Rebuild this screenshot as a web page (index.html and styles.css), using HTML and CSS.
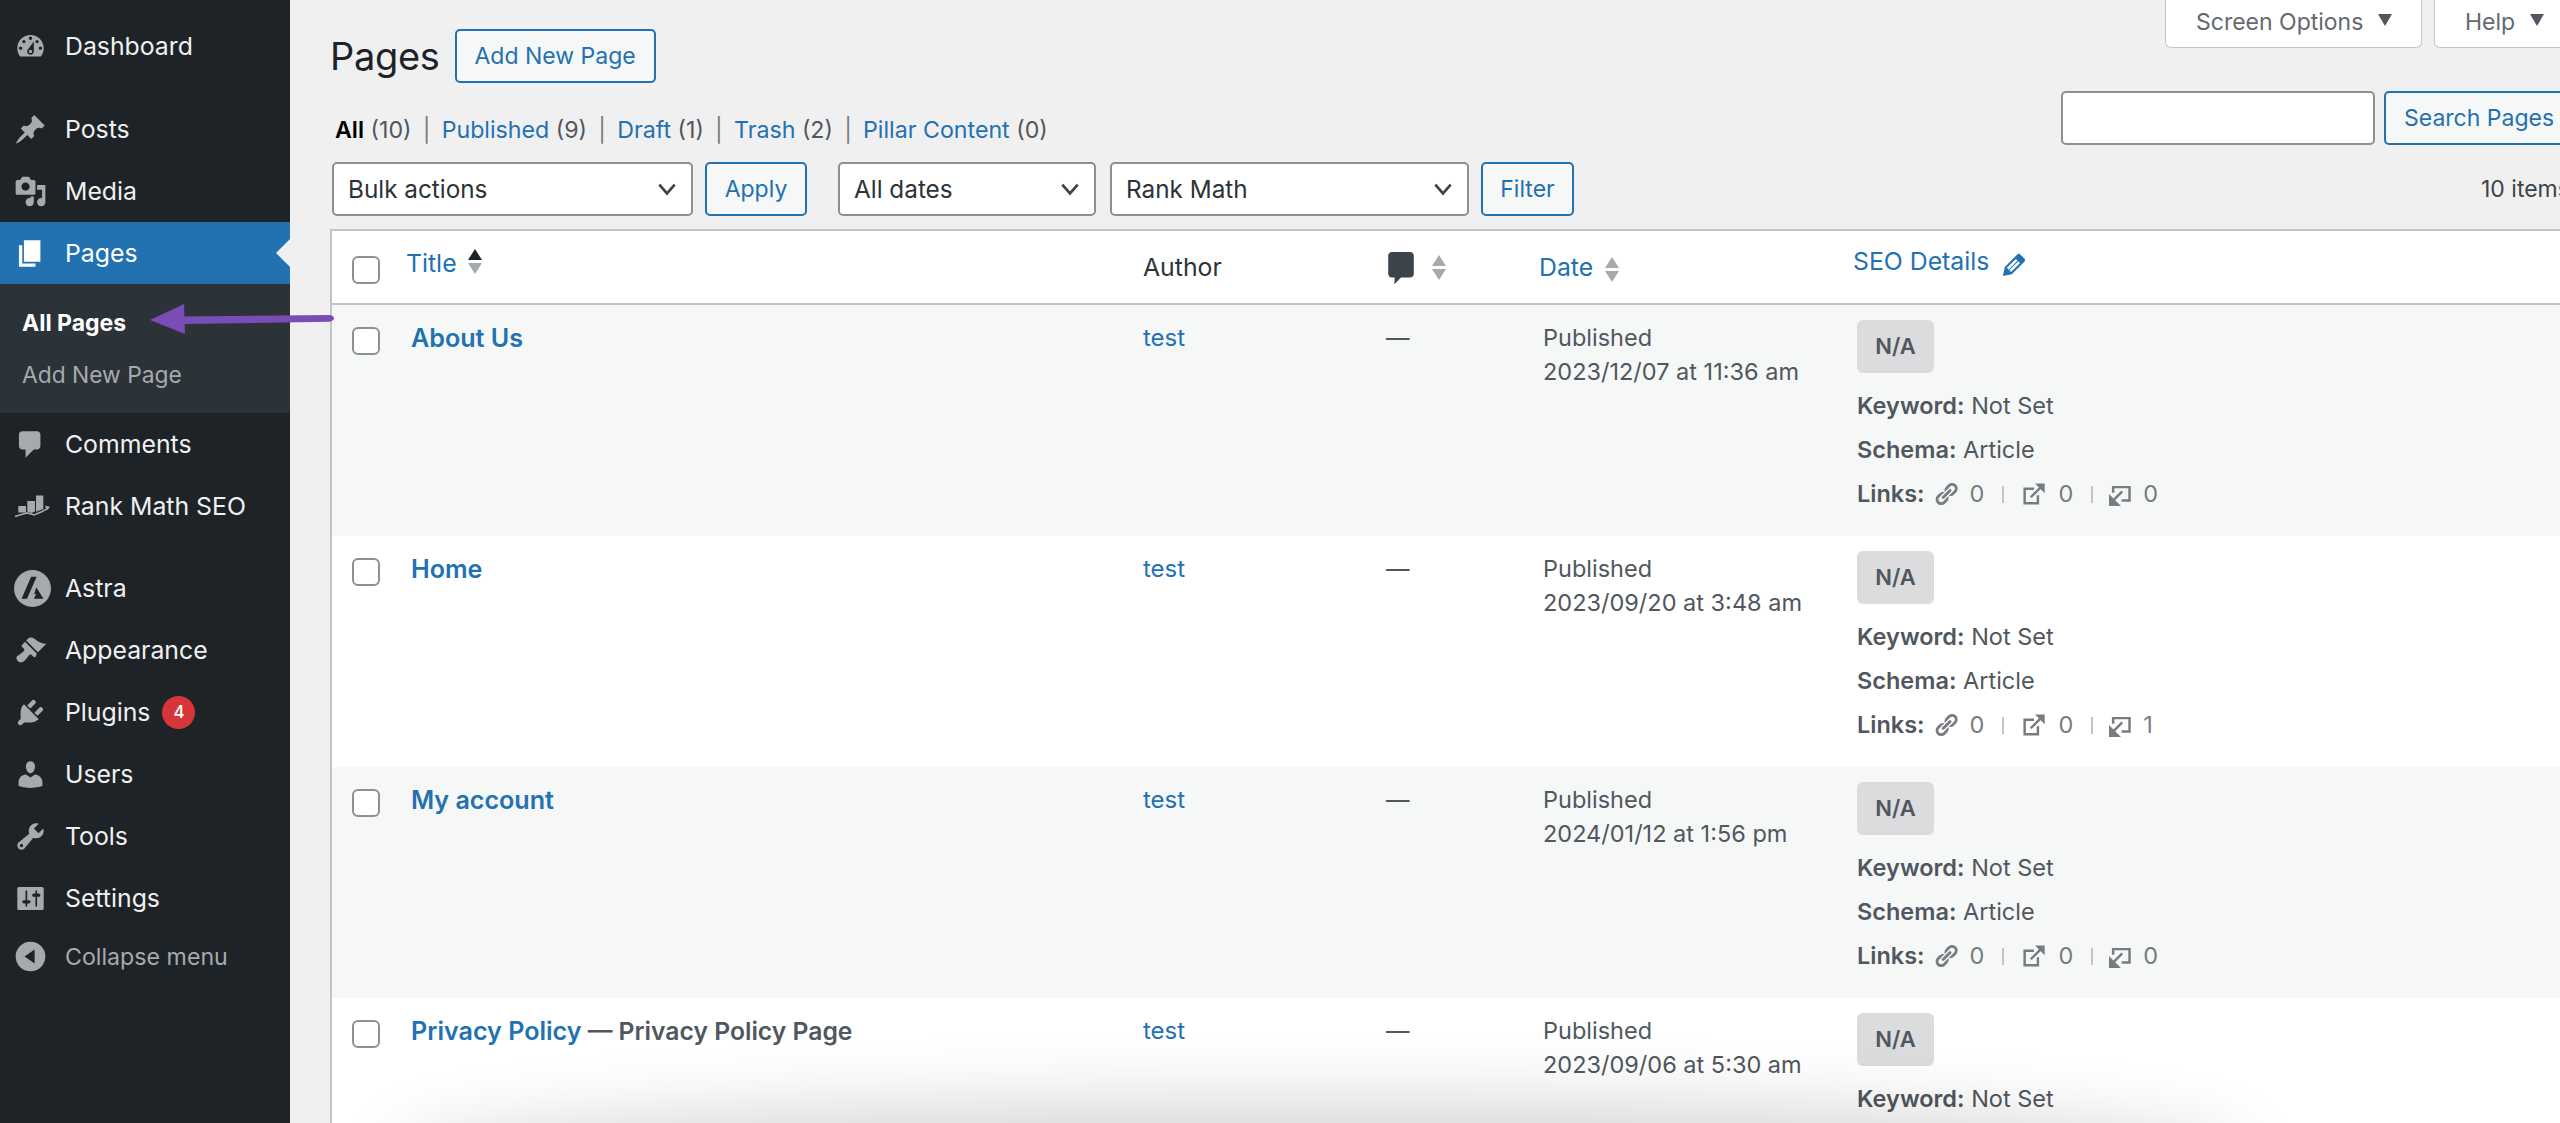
FILE: index.html
```html
<!DOCTYPE html>
<html lang="en">
<head>
<meta charset="utf-8">
<title>Pages</title>
<link rel="stylesheet" href="styles.css">
</head>
<body>
<svg class="defs" width="0" height="0" aria-hidden="true">
  <symbol id="i-link" viewBox="0 0 20 20"><path fill="currentColor" d="M17.74 2.76c1.68 1.69 1.68 4.41 0 6.1l-1.53 1.52c-1.12 1.12-2.7 1.47-4.14 1.09l2.62-2.61.76-.77.76-.76c.84-.84.84-2.2 0-3.04-.84-.85-2.2-.85-3.04 0l-.77.76-3.38 3.38c-.37-1.44-.02-3.02 1.1-4.14l1.52-1.53c1.69-1.68 4.42-1.68 6.1 0zM8.59 13.43l5.34-5.34c.42-.42.42-1.1 0-1.52-.44-.43-1.13-.39-1.53 0l-5.33 5.34c-.42.42-.42 1.1 0 1.52.44.43 1.13.39 1.52 0zm-.76 2.29l4.14-4.15c.38 1.44.03 3.02-1.09 4.14l-1.52 1.53c-1.69 1.68-4.41 1.68-6.1 0-1.68-1.68-1.68-4.42 0-6.1l1.53-1.52c1.12-1.12 2.7-1.47 4.14-1.1l-4.14 4.15c-.85.84-.85 2.2 0 3.05.84.84 2.2.84 3.04 0z"/></symbol>
  <symbol id="i-ext" viewBox="0 0 20 20"><path fill="none" stroke="currentColor" stroke-width="1.900" d="M10 5.900H2.800V17.100H13V11M7.500 12.500L15.500 4.500"/><path fill="currentColor" d="M10.800 2H18.200V9.400z"/></symbol>
  <symbol id="i-int" viewBox="0 0 20 20"><path fill="none" stroke="currentColor" stroke-width="1.900" d="M5.500 9V4.700H18.100V15H12M12.500 8L6 14.500"/><path fill="currentColor" d="M2.300 10V19.200H11.500z"/></symbol>
</svg>

<aside class="sidebar">
  <ul class="menu">
    <li class="item"><svg class="ico" viewBox="0 0 20 20"><path fill-rule="evenodd" d="M3.76 16h12.48c1.1-1.37 1.76-3.11 1.76-5 0-4.42-3.58-8-8-8s-8 3.58-8 8c0 1.89.66 3.63 1.76 5zM10 4c.55 0 1 .45 1 1s-.45 1-1 1-1-.45-1-1 .45-1 1-1zM6 6c.55 0 1 .45 1 1s-.45 1-1 1-1-.45-1-1 .45-1 1-1zm8 0c.55 0 1 .45 1 1s-.45 1-1 1-1-.45-1-1 .45-1 1-1zm-5.370 5.550L12 7v6c0 1.100-.9 2-2 2s-2-.9-2-2c0-.57.24-1.080.63-1.450zM4 10c.55 0 1 .45 1 1s-.45 1-1 1-1-.45-1-1 .45-1 1-1zm12 0c.55 0 1 .45 1 1s-.45 1-1 1-1-.45-1-1 .45-1 1-1zm-5 3c0-.55-.45-1-1-1s-1 .45-1 1 .45 1 1 1 1-.45 1-1z"/></svg>Dashboard</li>
    <li class="item gap-s"><svg class="ico" viewBox="0 0 20 20"><path d="M10.440 3.020l1.820-1.820 6.360 6.350-1.830 1.820c-1.050-.68-2.480-.57-3.410.36l-.75.75c-.92.93-1.040 2.350-.35 3.410l-1.830 1.820-2.410-2.410-2.800 2.790c-.42.42-3.380 2.710-3.800 2.290s1.860-3.390 2.280-3.810l2.790-2.790L4.100 9.360l1.830-1.820c1.050.69 2.480.57 3.400-.36l.75-.75c.93-.92 1.050-2.350.36-3.410z"/></svg>Posts</li>
    <li class="item"><svg class="ico" viewBox="0 0 20 20"><path fill-rule="evenodd" d="M13 11V4c0-.55-.45-1-1-1h-1.670L9 1H5L3.670 3H2c-.55 0-1 .45-1 1v7c0 .55.45 1 1 1h10c.55 0 1-.45 1-1zM7 4.500c1.380 0 2.500 1.120 2.500 2.500S8.380 9.500 7 9.500 4.500 8.380 4.500 7 5.620 4.500 7 4.500zM14 6h5v10.500c0 1.380-1.120 2.500-2.500 2.500S14 17.880 14 16.500s1.120-2.500 2.500-2.500c.17 0 .34.02.5.05V9h-3V6zm-4 8.050V13h2v3.500c0 1.380-1.120 2.500-2.500 2.500S7 17.880 7 16.500 8.120 14 9.500 14c.17 0 .34.02.5.05z"/></svg>Media</li>
    <li class="item current"><svg class="ico" viewBox="0 0 20 20"><path d="M6 15V2h10v13H6zm-1 1h8v2H3V5h2v11z"/></svg>Pages</li>
    <li class="submenu">
      <a class="sub on">All Pages</a>
      <a class="sub">Add New Page</a>
    </li>
    <li class="item"><svg class="ico" viewBox="0 0 20 20"><path d="M5 2h9c1.100 0 2 .9 2 2v7c0 1.100-.9 2-2 2h-2l-5 5v-5H5c-1.100 0-2-.9-2-2V4c0-1.100.9-2 2-2z"/></svg>Comments</li>
    <li class="item"><svg class="ico ico-big" viewBox="0 0 37 37"><path d="M4.300 18h7.700v6.500H4.300zM13.300 13H21v10.500l-3.500 1.500-4.200-1.500zM22 7.500h7.300V21l-7.300 2.800z"/><path fill="none" stroke="#a7aaad" stroke-width="1.600" d="M1 28.500l8-2.600 4.500-1 6.500 2 7-3 7.500-3.800"/><path d="M31 17.500l5 1.200-3.400 3.600z"/></svg>Rank Math SEO</li>
    <li class="item gap-l"><svg class="ico ico-big" viewBox="0 0 108 108"><circle cx="54" cy="54" r="54"/><path class="astra-a" d="M50 20h16L38 84H22zM65 50l21 34H58l7-14-6 1z"/></svg>Astra</li>
    <li class="item"><svg class="ico" viewBox="0 0 20 20"><path d="M14.480 11.060L7.410 3.990l1.500-1.500c.5-.56 2.300-.47 3.510.32 1.210.8 1.430 1.280 2.910 2.100 1.180.64 2.450 1.260 4.450.85zm-.71.71L6.700 4.700 4.930 6.470c-.39.39-.39 1.020 0 1.410l1.060 1.060c.39.39.39 1.030 0 1.420-.6.6-1.430 1.110-2.210 1.690-.35.26-.7.53-1.010.84C1.430 13.230.99 15.040 2.300 16.350s3.120.87 4.450-.43c.31-.31.58-.66.84-1.010.58-.78 1.090-1.610 1.690-2.210.39-.39 1.030-.39 1.420 0l1.060 1.060c.39.39 1.020.39 1.410 0z"/></svg>Appearance</li>
    <li class="item"><svg class="ico" viewBox="0 0 20 20"><path d="M13.110 4.360L9.870 7.600 8 5.730l3.240-3.240c.35-.34 1.050-.2 1.560.32.52.51.66 1.210.31 1.550zm-8 1.770l.91-1.120 9.010 9.010-1.190.84c-.71.71-2.630 1.160-3.820 1.160H6.140L4.900 17.260c-.59.59-1.540.59-2.120 0-.59-.58-.59-1.530 0-2.120l1.240-1.240v-3.880c0-1.130.4-3.190 1.090-3.890zm7.260 3.970l3.240-3.240c.34-.35 1.040-.21 1.550.31.52.51.66 1.210.31 1.550l-3.240 3.250z"/></svg>Plugins<span class="badge">4</span></li>
    <li class="item"><svg class="ico" viewBox="0 0 20 20"><path d="M10 9.250c-2.270 0-2.730-3.440-2.730-3.440C7 4.020 7.820 2 9.970 2c2.160 0 2.980 2.020 2.710 3.810 0 0-.41 3.440-2.680 3.440zm0 2.570L12.720 10c2.390 0 4.520 2.330 4.520 4.530v2.490s-3.650 1.130-7.240 1.130c-3.650 0-7.240-1.130-7.240-1.130v-2.490c0-2.250 1.940-4.480 4.470-4.480z"/></svg>Users</li>
    <li class="item"><svg class="ico" viewBox="0 0 20 20"><path fill-rule="evenodd" d="M16.680 9.770c-1.340 1.340-3.300 1.670-4.950.99l-5.410 6.520c-.99.99-2.590.99-3.580 0s-.99-2.590 0-3.570l6.520-5.420c-.68-1.650-.35-3.610.99-4.950 1.280-1.280 3.120-1.620 4.720-1.060l-2.890 2.890 2.820 2.820 2.860-2.870c.53 1.580.18 3.390-1.080 4.650zM3.810 16.210c.4.39 1.040.39 1.430 0 .4-.4.4-1.040 0-1.430-.39-.4-1.030-.4-1.430 0-.39.39-.39 1.030 0 1.430z"/></svg>Tools</li>
    <li class="item"><svg class="ico" viewBox="0 0 20 20"><path fill-rule="evenodd" d="M18 16V4c0-.55-.45-1-1-1H3c-.55 0-1 .45-1 1v12c0 .55.45 1 1 1h14c.55 0 1-.45 1-1zM8 11h1c.55 0 1 .45 1 1s-.45 1-1 1H8v1.500c0 .28-.22.5-.5.5s-.5-.22-.5-.5V13H6c-.55 0-1-.45-1-1s.45-1 1-1h1V5.500c0-.28.22-.5.5-.5s.5.22.5.5V11zm5-2h-1c-.55 0-1-.45-1-1s.45-1 1-1h1V5.500c0-.28.22-.5.5-.5s.5.22.5.5V7h1c.55 0 1 .45 1 1s-.45 1-1 1h-1v5.500c0 .28-.22.5-.5.5s-.5-.22-.5-.5V9z"/></svg>Settings</li>
    <li class="item collapse"><svg class="ico" viewBox="0 0 20 20"><path fill-rule="evenodd" d="M10 1a9 9 0 1 0 0 18 9 9 0 0 0 0-18zm2.500 4.800v8.400L6.400 10z"/></svg>Collapse menu</li>
  </ul>
</aside>

<main class="main">
  <div class="tabs">
    <div class="tab tab-screen">Screen Options<span class="caret"></span></div>
    <div class="tab tab-help">Help<span class="caret"></span></div>
  </div>

  <div class="title-row">
    <h1>Pages</h1>
    <a class="btn btn-add">Add New Page</a>
  </div>

  <div class="views-row">
    <ul class="views">
      <li><b>All</b> <span>(10)</span></li>
      <li><a>Published</a> <span>(9)</span></li>
      <li><a>Draft</a> <span>(1)</span></li>
      <li><a>Trash</a> <span>(2)</span></li>
      <li><a>Pillar Content</a> <span>(0)</span></li>
    </ul>
    <div class="search">
      <input class="search-input" type="text" aria-label="Search">
      <a class="btn btn-search">Search Pages</a>
    </div>
  </div>

  <div class="actions">
    <select class="sel sel-bulk"><option>Bulk actions</option></select>
    <a class="btn btn-apply">Apply</a>
    <select class="sel sel-date"><option>All dates</option></select>
    <select class="sel sel-rank"><option>Rank Math</option></select>
    <a class="btn btn-filter">Filter</a>
    <span class="count">10 items</span>
  </div>

  <table class="list">
    <colgroup>
      <col class="c-check"><col class="c-title"><col class="c-author"><col class="c-comm"><col class="c-date"><col class="c-seo">
    </colgroup>
    <thead>
      <tr>
        <th><span class="box"></span></th>
        <th class="th-title"><a>Title</a><span class="sort up"><i></i><i></i></span></th>
        <th class="th-author">Author</th>
        <th class="th-comm"><svg class="bubble" viewBox="0 0 16 20"><path d="M2.400 0h11.200C15 0 16 1 16 2.400v11.200c0 1.400-1 2.400-2.400 2.400H8l-4.200 4.200.3-4.200H2.400C1 16 0 15 0 13.600V2.400C0 1 1 0 2.400 0z"/></svg><span class="sort"><i></i><i></i></span></th>
        <th class="th-date"><a>Date</a><span class="sort"><i></i><i></i></span></th>
        <th class="th-seo"><a>SEO Details</a><svg class="pencil" viewBox="0 0 20 20"><path fill-rule="evenodd" d="M13.890 3.390l2.710 2.720c.46.46.42 1.240.03 1.640l-8.010 8.020-5.560 1.160 1.160-5.580s7.600-7.630 7.990-8.030c.39-.39 1.220-.39 1.680.07zm-2.730 2.790l-5.590 5.610 1.110 1.110 5.540-5.650zm-2.970 8.230l5.580-5.600-1.070-1.080-5.590 5.600z"/></svg></th>
      </tr>
    </thead>
    <tbody>
      <tr class="odd">
        <td><span class="box"></span></td>
        <td><a class="ttl">About Us</a></td>
        <td><a>test</a></td>
        <td class="dash">—</td>
        <td>Published<br>2023/12/07 at 11:36 am</td>
        <td><div class="na">N/A</div><p><b>Keyword:</b> Not Set</p><p><b>Schema:</b> Article</p><p class="links"><b>Links:</b><svg class="lk lk-a"><use href="#i-link"/></svg><span>0</span><i class="sep"></i><svg class="lk"><use href="#i-ext"/></svg><span>0</span><i class="sep"></i><svg class="lk lk-c"><use href="#i-int"/></svg><span>0</span></p></td>
      </tr>
      <tr>
        <td><span class="box"></span></td>
        <td><a class="ttl">Home</a></td>
        <td><a>test</a></td>
        <td class="dash">—</td>
        <td>Published<br>2023/09/20 at 3:48 am</td>
        <td><div class="na">N/A</div><p><b>Keyword:</b> Not Set</p><p><b>Schema:</b> Article</p><p class="links"><b>Links:</b><svg class="lk lk-a"><use href="#i-link"/></svg><span>0</span><i class="sep"></i><svg class="lk"><use href="#i-ext"/></svg><span>0</span><i class="sep"></i><svg class="lk lk-c"><use href="#i-int"/></svg><span>1</span></p></td>
      </tr>
      <tr class="odd">
        <td><span class="box"></span></td>
        <td><a class="ttl">My account</a></td>
        <td><a>test</a></td>
        <td class="dash">—</td>
        <td>Published<br>2024/01/12 at 1:56 pm</td>
        <td><div class="na">N/A</div><p><b>Keyword:</b> Not Set</p><p><b>Schema:</b> Article</p><p class="links"><b>Links:</b><svg class="lk lk-a"><use href="#i-link"/></svg><span>0</span><i class="sep"></i><svg class="lk"><use href="#i-ext"/></svg><span>0</span><i class="sep"></i><svg class="lk lk-c"><use href="#i-int"/></svg><span>0</span></p></td>
      </tr>
      <tr>
        <td><span class="box"></span></td>
        <td><a class="ttl">Privacy Policy</a><b class="state"> — Privacy Policy Page</b></td>
        <td><a>test</a></td>
        <td class="dash">—</td>
        <td>Published<br>2023/09/06 at 5:30 am</td>
        <td><div class="na">N/A</div><p><b>Keyword:</b> Not Set</p></td>
      </tr>
    </tbody>
  </table>
</main>

<svg class="arrow" viewBox="0 0 184 30"><path d="M33 12.500l146-1.500c3 0 5 1.500 5 3.300s-2 3.300-5 3.500L33 20z"/><path d="M0 16L34 0l1 30z"/></svg>
<div class="fade"></div>
</body>
</html>
```

FILE: styles.css
```css
* { box-sizing: border-box; }
html, body { margin: 0; padding: 0; height: 1123px; overflow: hidden; }
body {
  position: relative;
  display: flex;
  width: 2560px;
  background: #f0f0f1;
  color: #3c434a;
  font-family: Inter, "Liberation Sans", sans-serif;
  font-size: 23.5px;
}
a { color: #2271b1; text-decoration: none; }
.defs { position: absolute; }

/* sidebar */
.sidebar { flex: 0 0 290px; height: 1123px; background: #1d2327; }
.menu { list-style: none; margin: 0; padding: 15px 0 0; }
.item {
  display: flex;
  align-items: center;
  height: 62px;
  padding-left: 14px;
  color: #f0f0f1;
  font-size: 24.8px;
}
.item.gap-s { margin-top: 21px; }
.item.gap-l { margin-top: 20px; }
.ico { flex: none; width: 33px; height: 33px; margin-right: 18px; fill: #a7aaad; }
.ico-big { width: 37px; height: 37px; margin-right: 14px; }
.astra-a { fill: #1d2327; }
.current { position: relative; background: #2271b1; color: #fff; }
.current .ico { fill: #fff; }
.current::after {
  content: "";
  position: absolute;
  right: 0;
  top: 50%;
  margin-top: -14px;
  border: 14px solid transparent;
  border-left: 0;
  border-right: 14px solid #f0f0f1;
}
.submenu {
  display: flex;
  flex-direction: column;
  height: 129px;
  padding: 14px 0 0 22px;
  background: #2c3338;
}
.sub { height: 51px; line-height: 51px; font-size: 22.8px; color: #a7aaad; }
.sub.on { color: #fff; font-weight: 700; font-size: 23px; }
.badge {
  width: 33px;
  height: 33px;
  margin-left: 12px;
  border-radius: 50%;
  background: #d63638;
  color: #fff;
  font-size: 17px;
  font-weight: 500;
  line-height: 33px;
  text-align: center;
}
.collapse { height: 55px; color: #a7aaad; font-size: 23.2px; }

/* main */
.main { position: relative; flex: none; width: 2270px; height: 1123px; padding-left: 40px; overflow: hidden; }
.tabs { position: absolute; top: 0; left: 1875px; display: flex; gap: 12px; }
.tab {
  display: flex;
  align-items: center;
  height: 48px;
  padding: 0 0 3px 30px;
  background: #fff;
  border: 1px solid #c3c4c7;
  border-top: 0;
  border-radius: 0 0 6px 6px;
  color: #646970;
  font-size: 23px;
}
.tab-screen { width: 257px; }
.tab-help { width: 140px; }
.caret {
  margin-left: 15px;
  margin-top: -4px;
  border-left: 7px solid transparent;
  border-right: 7px solid transparent;
  border-top: 12px solid #50575e;
}
.title-row { display: flex; align-items: center; padding-top: 29px; height: 83px; }
h1 { margin: 0; font-size: 38px; font-weight: 400; color: #1d2327; line-height: 54px; letter-spacing: -0.3px; }
.btn {
  display: flex;
  flex: none;
  align-items: center;
  justify-content: center;
  height: 54px;
  background: #f6f7f7;
  border: 2px solid #2271b1;
  border-radius: 5px;
  color: #2271b1;
  font-size: 23px;
}
.btn-add { width: 201px; margin-left: 15px; }
.views-row { position: relative; height: 79px; }
.views { display: flex; list-style: none; margin: 0; padding: 32px 0 0 5px; color: #50575e; font-size: 23.2px; line-height: 30px; }
.views li + li::before { content: "|"; margin: 0 11.2px; color: #787c82; }
.views b { color: #000; font-weight: 600; }
.search { position: absolute; right: -80px; top: 8px; display: flex; gap: 9px; }
.search-input { width: 314px; height: 54px; margin-left: -1px; background: #fff; border: 2px solid #8c8f94; border-radius: 5px; }
.btn-search { width: 256px; justify-content: flex-start; padding-left: 18px; }
.actions { display: flex; align-items: center; height: 54px; margin: 0 0 13px 2px; }
.sel {
  flex: none;
  appearance: none;
  height: 54px;
  padding: 0 0 0 14px;
  background: #fff url("data:image/svg+xml,%3Csvg xmlns='http://www.w3.org/2000/svg' viewBox='0 0 20 20'%3E%3Cpath d='M3 6l7 8 7-8' fill='none' stroke='%233c434a' stroke-width='2.400'/%3E%3C/svg%3E") no-repeat right 13px center / 22px 22px;
  border: 2px solid #8c8f94;
  border-radius: 5px;
  color: #2c3338;
  font: inherit;
  font-size: 24.3px;
}
.sel-bulk { width: 361px; }
.btn-apply { width: 102px; margin-left: 12px; }
.sel-date { width: 258px; margin-left: 31px; }
.sel-rank { width: 359px; margin-left: 14px; }
.btn-filter { width: 93px; margin-left: 12px; }
.count { flex: none; margin-left: 907px; white-space: nowrap; color: #3c434a; font-size: 23px; }

/* table */
.list {
  width: 2300px;
  table-layout: fixed;
  border-collapse: separate;
  border-spacing: 0;
  background: #fff;
  border: 2px solid #c3c4c7;
  border-width: 2px 0 0 2px;
}
.c-check { width: 64px; }
.c-title { width: 734px; }
.c-author { width: 240px; }
.c-comm { width: 160px; }
.c-date { width: 311px; }
th {
  height: 74px;
  padding: 0 0 0 12px;
  border-bottom: 2px solid #c3c4c7;
  font-weight: 400;
  font-size: 24.8px;
  text-align: left;
  white-space: nowrap;
}
th:first-child, td:first-child { padding: 0 0 0 20px; }
th .box { margin-top: 6px; }
td {
  height: 231px;
  padding: 16px 0 0 13px;
  vertical-align: top;
  line-height: 34px;
  color: #50575e;
  font-size: 23.5px;
}
td a { font-size: 24px; }
.odd td { background: #f6f7f7; }
td:first-child { padding-top: 22px; }
.box {
  display: block;
  width: 28px;
  height: 28px;
  background: #fff;
  border: 2px solid #8c8f94;
  border-radius: 6px;
}
.ttl { margin-left: 2px; font-weight: 600; font-size: 25.1px; }
.state { font-weight: 600; font-size: 24.7px; color: #50575e; }
.th-title { padding-left: 10px; }
.th-title a, .th-seo a { position: relative; top: -4px; }
.th-author { padding-left: 13px; color: #2c3338; }
.sort { display: inline-flex; flex-direction: column; gap: 3px; margin-left: 11px; vertical-align: middle; }
.th-date .sort { margin-left: 12px; }
.sort i { display: block; width: 0; height: 0; border-left: 7px solid transparent; border-right: 7px solid transparent; }
.sort i:first-child { border-bottom: 11px solid #a7aaad; }
.sort i:last-child { border-top: 11px solid #a7aaad; }
.sort.up { position: relative; top: -8px; }
.sort.up i:first-child { border-bottom-color: #1d2327; }
.th-comm { padding-left: 18px; }
.bubble { width: 26px; height: 32px; fill: #3c434a; vertical-align: middle; }
.th-comm .sort { margin-left: 18px; }
.th-date { padding-left: 9px; }
.pencil { position: relative; top: -3px; width: 32px; height: 32px; margin-left: 9px; fill: #2271b1; vertical-align: middle; }
td.dash { color: #50575e; padding-left: 16px; }
.na {
  width: 77px;
  height: 53px;
  margin: -1px 0 11px 3px;
  background: #dcdcde;
  border-radius: 6px;
  color: #50575e;
  font-weight: 600;
  font-size: 22px;
  line-height: 53px;
  text-align: center;
}
td p { margin: 0 0 0 3px; line-height: 44px; }
td p b { font-weight: 600; }
.links { display: flex; align-items: center; }
.lk { width: 26px; height: 26px; color: #787c82; }
.lk-a { margin-left: 8px; }
.lk-c { margin-left: -4px; }
.links span { margin-left: 11px; color: #787c82; }
.sep { width: 2px; height: 17px; margin: 0 17px 0 18px; background: #c3c4c7; }

/* overlays */
.arrow { position: absolute; left: 150px; top: 304px; width: 184px; height: 30px; fill: #7a4cb6; }
.fade {
  position: absolute;
  left: 420px;
  right: 340px;
  top: 1130px;
  height: 60px;
  border-radius: 50%;
  box-shadow: 0 0 70px 30px rgba(0,0,0,.16);
}
```
